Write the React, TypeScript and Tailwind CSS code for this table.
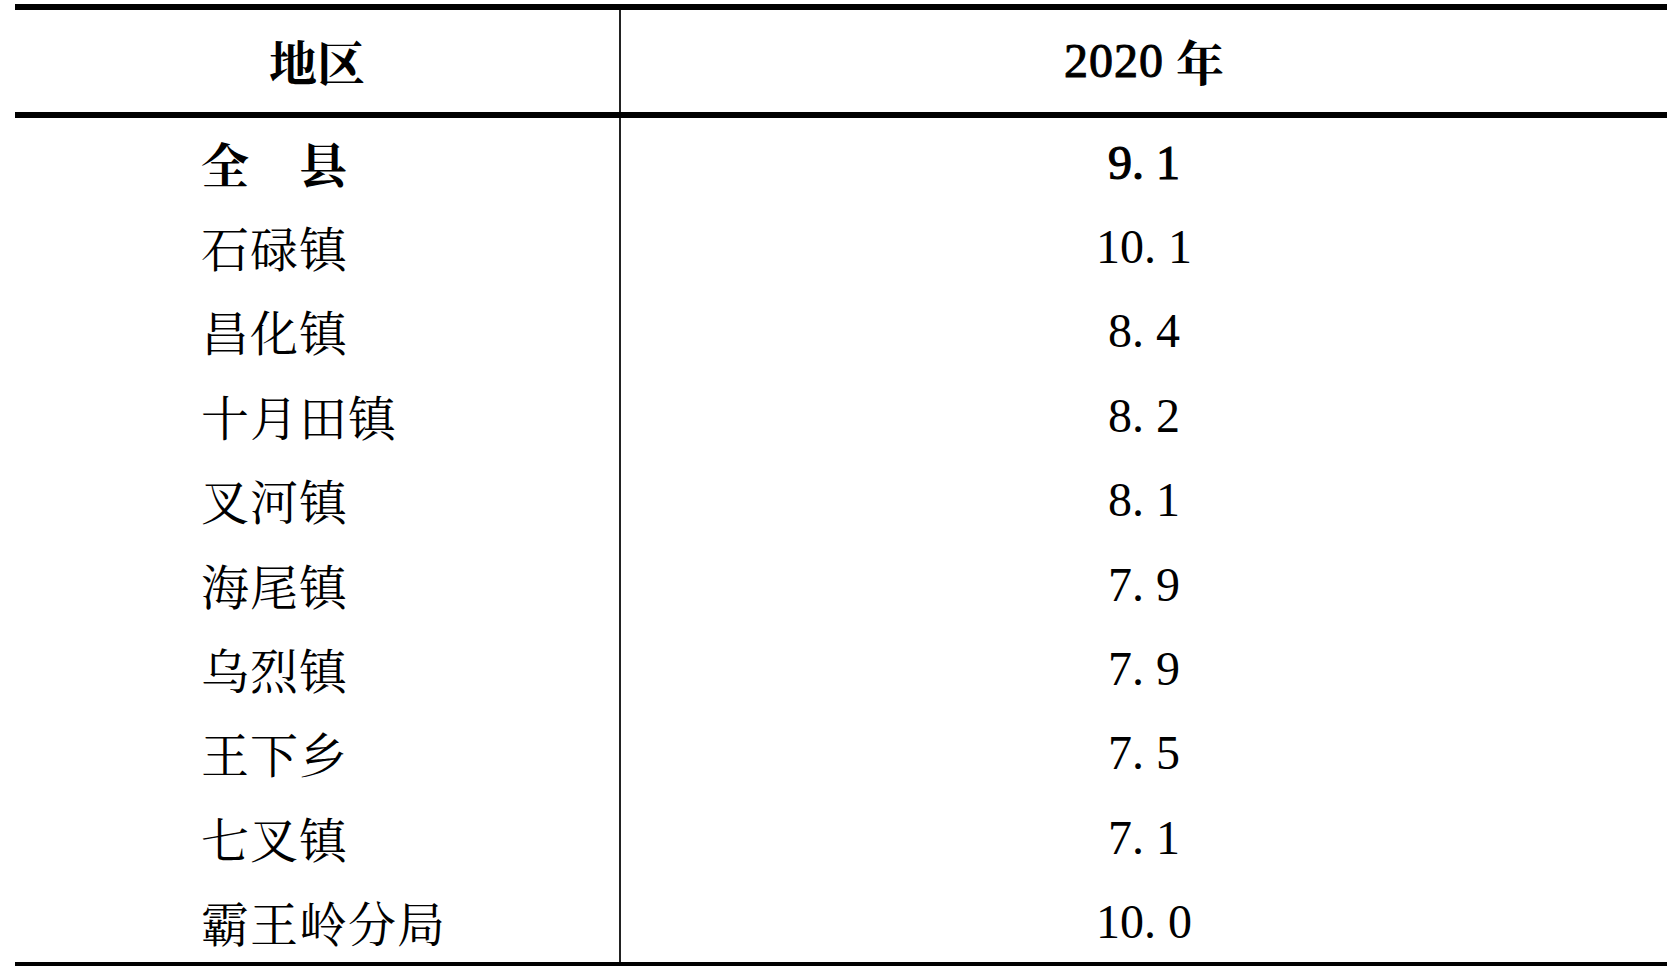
const cjk = '"Noto Serif CJK SC", "Noto Sans CJK SC", serif';
const num = '"Liberation Serif", "Times New Roman", serif';

type Row = { name: string; value: string; total?: boolean };

const rows: Row[] = [
  { name: "全　县", value: "9.1", total: true },
  { name: "石碌镇", value: "10.1" },
  { name: "昌化镇", value: "8.4" },
  { name: "十月田镇", value: "8.2" },
  { name: "叉河镇", value: "8.1" },
  { name: "海尾镇", value: "7.9" },
  { name: "乌烈镇", value: "7.9" },
  { name: "王下乡", value: "7.5" },
  { name: "七叉镇", value: "7.1" },
  { name: "霸王岭分局", value: "10.0" },
];

// 小数点后留半个字宽，仿宋体数字的样子
function Value({ v, strong }: { v: string; strong?: boolean }) {
  const [a, b] = v.split(".");
  return (
    <span
      className={strong ? "[-webkit-text-stroke:1.2px_black]" : ""}
      style={{ fontFamily: num }}
    >
      {a}.<span className="ml-[12px]">{b}</span>
    </span>
  );
}

export default function App() {
  return (
    <div className="w-[1672px] h-[966px] bg-white overflow-hidden pt-[4px] pl-[15px] text-black">
      <div className="w-[1652px] border-t-[6px] border-b-[6px] border-black">
        {/* 表头 */}
        <div className="grid grid-cols-[606px_1046px] h-[108px] border-b-[6px] border-black">
          <div
            className="border-r-2 border-[#222] flex items-center justify-center text-[48px] font-bold leading-none"
            style={{ fontFamily: cjk }}
          >
            地区
          </div>
          <div className="flex items-center justify-center text-[48px] leading-none">
            <span className="[-webkit-text-stroke:1px_black] tracking-[1px]" style={{ fontFamily: num }}>
              2020
            </span>
            <span className="ml-[12px] font-bold" style={{ fontFamily: cjk }}>
              年
            </span>
          </div>
        </div>

        {/* 数据行 */}
        {rows.map((r) => (
          <div key={r.name} className="grid grid-cols-[606px_1046px] h-[84.4px]">
            <div
              className={
                "border-r-2 border-[#222] flex items-center pl-[186px] pt-[5px] text-[48px] leading-none tracking-[1px] " +
                (r.total ? "font-bold" : "font-normal")
              }
              style={{ fontFamily: cjk }}
            >
              {r.name}
            </div>
            <div className="flex items-center justify-center pt-[5px] text-[48px] leading-none">
              <Value v={r.value} strong={r.total} />
            </div>
          </div>
        ))}
      </div>
    </div>
  );
}
